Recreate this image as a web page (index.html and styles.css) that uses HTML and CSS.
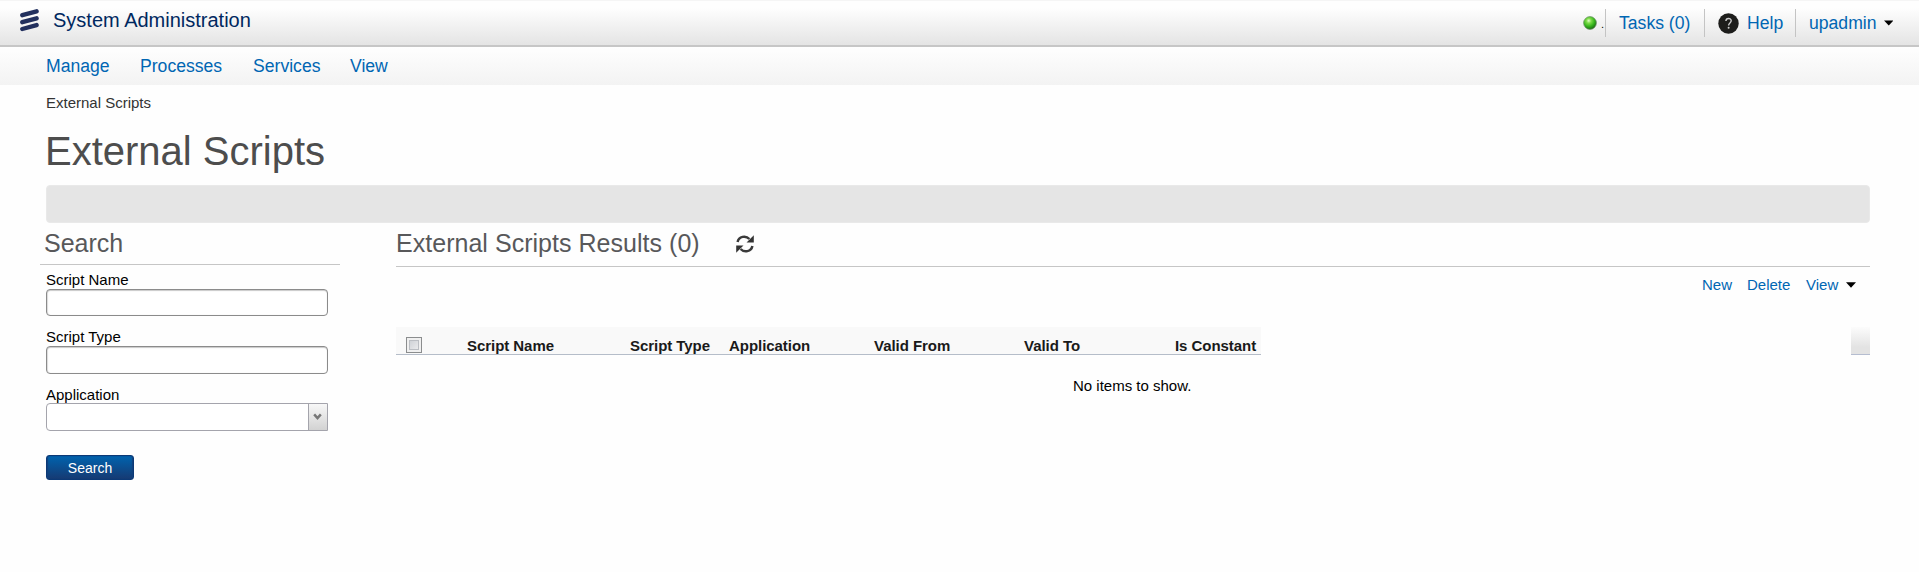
FILE: index.html
```html
<!DOCTYPE html>
<html lang="en">
<head>
<meta charset="utf-8">
<title>External Scripts</title>
<link rel="stylesheet" href="styles.css">
</head>
<body>
<header class="header">
  <svg class="logo" width="20" height="24" viewBox="0 0 20 24" fill="none" stroke="#22305e" stroke-width="4.4" stroke-linecap="round"><path d="M3.3 7.2L17.6 3.3M3.3 14.2L17.6 10.3M3.3 21L17.6 17.1"/></svg>
  <div class="product">System Administration</div>
  <div class="status">
    <svg width="14" height="14" viewBox="0 0 14 14"><defs><radialGradient id="led" cx=".4" cy=".32" r=".68"><stop offset="0" stop-color="#e2ffc8"/><stop offset=".28" stop-color="#7ddc48"/><stop offset=".65" stop-color="#35b51c"/><stop offset="1" stop-color="#1c6b12"/></radialGradient></defs><circle cx="7" cy="7" r="6.4" fill="url(#led)" stroke="#6d8f68" stroke-width=".7"/></svg>
    <span class="dot">.</span>
  </div>
  <a class="user-item tasks">Tasks (0)</a>
  <a class="user-item help"><svg class="help-icon" width="21" height="21" viewBox="0 0 21 21"><circle cx="10.5" cy="10.5" r="10.2" fill="#1d1d1b"/><path d="M7.9 8.1C7.9 4.6 13.2 4.7 13.2 7.8C13.2 10 10.6 9.9 10.6 12.4" fill="none" stroke="#ccc" stroke-width="1.4"/><circle cx="10.6" cy="14.8" r="1" fill="#ccc"/></svg>Help</a>
  <a class="user-item user">upadmin<svg class="caret" width="10" height="6" viewBox="0 0 10 6"><path d="M0 .3H10L5 5.7Z"/></svg></a>
</header>
<nav class="nav"><a class="n-manage">Manage</a><a class="n-processes">Processes</a><a class="n-services">Services</a><a>View</a></nav>
<main class="page">
  <div class="breadcrumb">External Scripts</div>
  <h1 class="title">External Scripts</h1>
  <div class="action-bar"></div>
  <div class="columns">
    <section class="search">
      <h2 class="heading search-heading">Search</h2>
      <form class="form">
        <label class="label" for="name">Script Name</label>
        <input class="field" id="name" type="text">
        <label class="label" for="type">Script Type</label>
        <input class="field tall" id="type" type="text">
        <div class="label">Application</div>
        <div class="select"><span class="select-button"><svg width="9" height="8" viewBox="0 0 10 8" fill="none" stroke="#777" stroke-width="2.8"><path d="M1.3 1.2L5 5.2L8.7 1.2"/></svg></span></div>
        <button class="submit" type="button">Search</button>
      </form>
    </section>
    <section class="results">
      <h2 class="heading results-heading"><span>External Scripts Results (0)</span>
        <svg class="refresh" width="18" height="18" viewBox="0 0 18 18"><g fill="none" stroke="#3a3a3a" stroke-width="2.5"><path d="M1.6 7C2.8 1.2 9.8.1 13.4 4"/><path d="M16.4 11C15.2 16.8 8.2 17.9 4.6 14"/></g><path d="M17.8.3V7.6H10.5ZM.2 17.7V10.4H7.5Z" fill="#333"/></svg>
      </h2>
      <div class="toolbar"><a class="t-new">New</a><a class="t-delete">Delete</a><a class="t-view">View</a><svg width="10" height="6" viewBox="0 0 10 6"><path d="M0 .3H10L5 5.7Z"/></svg></div>
      <div class="grid-head">
        <div class="row">
          <span class="check-cell"><span class="checkbox"></span></span>
          <span>Script Name</span><span>Script Type</span><span>Application</span><span>Valid From</span><span>Valid To</span><span>Is Constant</span>
        </div>
        <div class="corner"></div>
      </div>
      <div class="empty">No items to show.</div>
    </section>
  </div>
</main>
</body>
</html>
```
FILE: styles.css
```css
* { box-sizing: border-box; }
body { margin: 0; background: #fefefe; color: #000; font: 15px "Liberation Sans", Arial, sans-serif; }
.header { display: flex; align-items: flex-start; height: 47px; padding: 0 26px 0 19px; background: linear-gradient(#f5f5f5 0 1px, #fefefe 1px 8px, #e4e4e4 45px); border-bottom: 2px solid #c6c6c6; }
.logo { margin-top: 8px; }
.product { margin-left: 14px; line-height: 40px; font-size: 20px; color: #00285f; }
.status { display: flex; margin-left: auto; width: 22px; padding-top: 16px; }
.dot { margin-left: 4px; font-size: 11px; line-height: 17px; }
.user-item { display: flex; align-items: center; height: 28px; margin-top: 9px; border-left: 1px solid #c4c4c4; font-size: 17.6px; color: #0066b3; }
.tasks { width: 99px; padding-left: 13px; }
.help { width: 91px; padding-left: 13px; }
.help-icon { margin-right: 8px; }
.user { width: 98px; padding-left: 13px; }
.caret { margin-left: 7px; }
.nav { display: flex; height: 38px; padding-left: 46px; background: linear-gradient(#fefefe, #f3f3f3); line-height: 38px; font-size: 17.6px; color: #0066b3; }
.n-manage { width: 94px; }
.n-processes { width: 113px; }
.n-services { width: 97px; }
.page { padding: 0 49px 0 46px; }
.breadcrumb { line-height: 36px; color: #333; }
.title { margin: 0 0 4px -1px; line-height: 60px; font-size: 40px; font-weight: normal; color: #4d4d4d; }
.action-bar { height: 38px; border: 1px solid #e9e9e9; border-radius: 4px; background: #e5e5e5; }
.columns { display: flex; margin-left: -6px; }
.search { width: 300px; }
.heading { margin: 0; font-size: 25px; font-weight: normal; line-height: 41px; color: #58585a; border-bottom: 1px solid #c6c6c6; }
.search-heading { height: 42px; padding-left: 4px; }
.form { padding: 7px 12px 0 6px; }
.label { display: block; height: 17px; line-height: 16px; }
.field { display: block; width: 282px; height: 27px; margin: 0 0 13px; border: 1px solid #8b8b8b; border-radius: 4px; background: #fff; box-shadow: inset 0 1px 1px #c9c9c9, inset 1px 0 1px #ddd; }
.tall { height: 28px; }
.tall + .label { height: 16px; }
.select { display: flex; justify-content: flex-end; width: 282px; height: 28px; border: 1px solid #a4a4ac; border-radius: 4px 0 0 4px; background: #fff; }
.select-button { display: flex; align-items: center; justify-content: center; width: 19px; padding-right: 1px; border-left: 1px solid #a4a4ac; background: linear-gradient(#f7f7f7, #e5e5e5 50%, #d2d2d2); }
.submit { display: block; width: 88px; height: 25px; margin-top: 24px; padding: 0; border: 1px solid #0c3976; border-radius: 3px; background: linear-gradient(#0063ae, #163a73); box-shadow: inset 1px 0 1px #12417e, inset -1px 0 1px #12417e; color: #fff; font: 14px "Liberation Sans", Arial, sans-serif; }
.results { width: 1474px; margin-left: 56px; }
.results-heading { display: flex; align-items: flex-start; height: 44px; letter-spacing: 0.03px; }
.refresh { margin: 12px 0 0 36px; }
.toolbar { display: flex; align-items: center; height: 35px; padding-left: 1306px; color: #0066b3; }
.t-new { width: 45px; }
.t-delete { width: 59px; }
.t-view { width: 40px; }
.grid-head { display: flex; justify-content: space-between; height: 28px; margin-top: 25px; }
.row { display: grid; grid-template-columns: 71px 163px 99px 145px 150px 151px 86px; width: 865px; border-bottom: 1px solid #b5bdc9; background: #f9f9f9; font-weight: bold; letter-spacing: -0.05px; line-height: 37px; color: #1a1a1a; }
.check-cell { padding: 10px 0 0 10px; }
.checkbox { display: block; width: 16px; height: 16px; border: 1px solid #8b8d8e; background: linear-gradient(135deg, #c5c9cf, #f4f4f4); box-shadow: inset 0 0 0 2px #f0f0f0, inset 0 0 0 3px #bbbec3; }
.corner { width: 19px; border-bottom: 1px solid #b5bdd0; background: linear-gradient(#fcfcfc, #e3e3e3 75%); }
.empty { padding-left: 677px; margin-top: 21px; line-height: 20px; }
```
